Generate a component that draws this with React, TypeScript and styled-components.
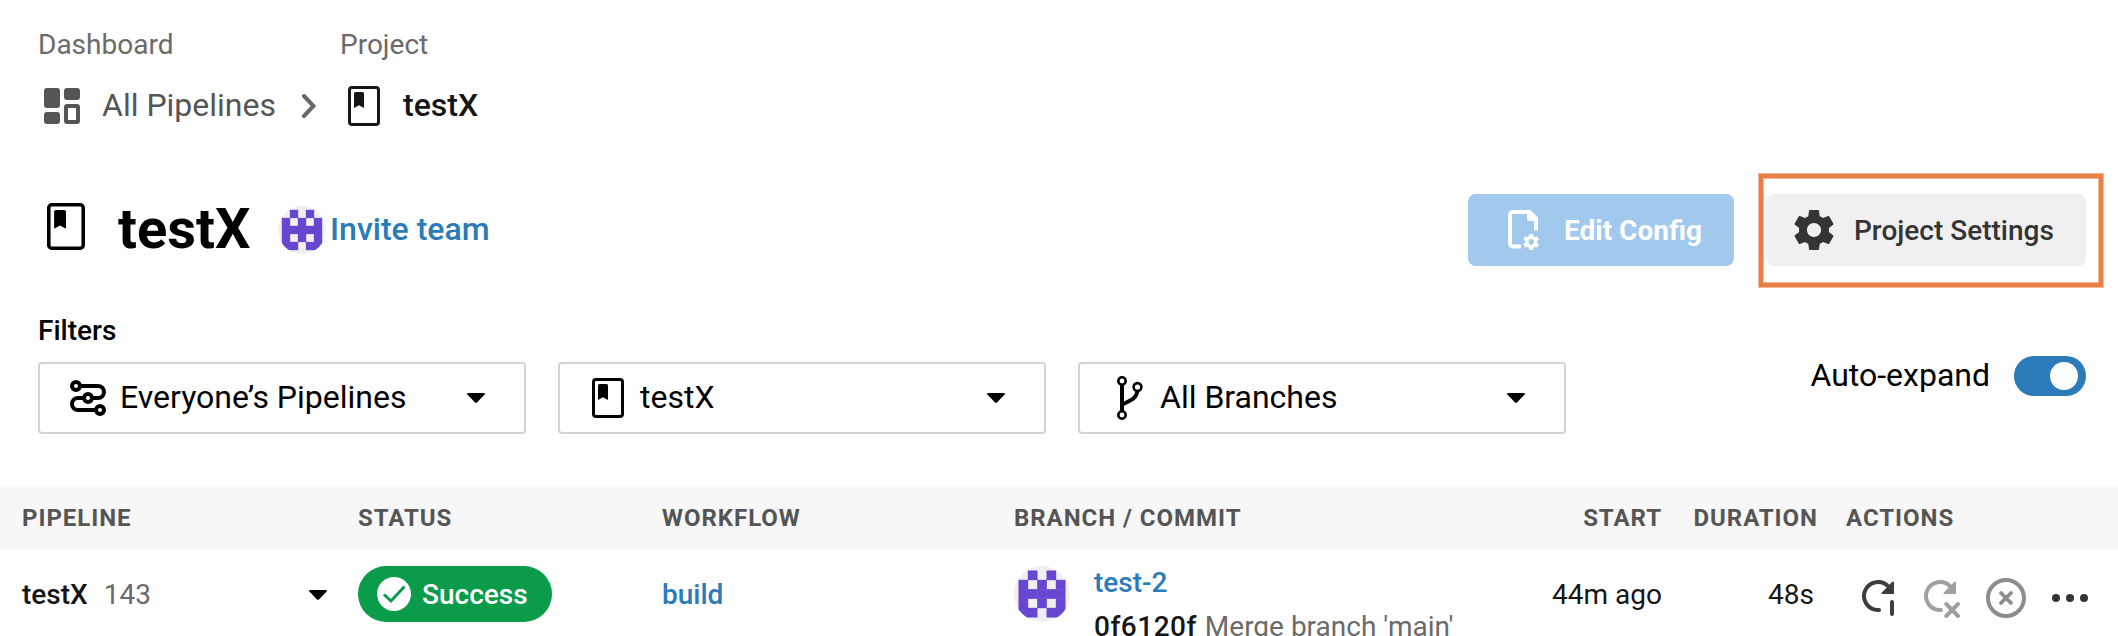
import React from 'react';
import styled, { createGlobalStyle } from 'styled-components';

const GlobalStyle = createGlobalStyle`
  * { box-sizing: border-box; }
  body {
    margin: 0;
    background: #fff;
    color: #000;
    font-family: Roboto, "Liberation Sans", sans-serif;
    overflow: hidden;
  }
  svg { display: block; flex: none; }
`;

const Page = styled.div`
  width: 2118px;
  height: 636px;
  overflow: hidden;
  background: #fff;
`;

/* ---------- breadcrumbs ---------- */
const Breadcrumbs = styled.nav`
  display: grid;
  grid-template-columns: 302px auto;
  grid-template-rows: 33px 44px;
  row-gap: 23px;
  padding: 28px 0 0 38px;
`;

const CrumbLabel = styled.span`
  font-size: 28px;
  line-height: 33px;
  color: #6a6a6a;
`;

const Crumb = styled.div<{ $pad: number }>`
  display: flex;
  align-items: center;
  padding-left: ${(p) => p.$pad}px;
`;

const CrumbText = styled.span<{ $current?: boolean; $gap: number }>`
  margin-left: ${(p) => p.$gap}px;
  font-size: 32px;
  line-height: 42px;
  margin-bottom: 2px;
  font-weight: ${(p) => (p.$current ? 500 : 400)};
  color: ${(p) => (p.$current ? '#161616' : '#555')};
`;

const ChevronSlot = styled.span`
  margin-left: 25px;
`;

/* ---------- title bar ---------- */
const TitleBar = styled.header`
  display: flex;
  align-items: center;
  height: 72px;
  margin-top: 66px;
  padding: 0 32px 0 47px;
`;

const TitleIcon = styled.span`
  margin-bottom: 8px;
`;

const Title = styled.h1`
  margin: 0 0 2px 33px;
  width: 160px;
  font-size: 56px;
  line-height: 64px;
  font-weight: 700;
`;

const InviteLink = styled.a`
  margin: 0 0 2px 4px;
  font-size: 32px;
  line-height: 40px;
  font-weight: 500;
  color: #2b7bb9;
`;

const TitleActions = styled.div`
  display: flex;
  gap: 32px;
  margin-left: auto;
`;

const Button = styled.button<{ $tone: 'primary' | 'neutral'; $width: number; $pad: number }>`
  position: relative;
  display: flex;
  align-items: center;
  width: ${(p) => p.$width}px;
  height: 72px;
  padding: 0 0 0 ${(p) => p.$pad}px;
  border: 0;
  border-radius: 8px;
  font: 500 28px/33px Roboto, "Liberation Sans", sans-serif;
  font-weight: ${(p) => (p.$tone === 'primary' ? 700 : 500)};
  white-space: nowrap;
  color: ${(p) => (p.$tone === 'primary' ? '#fff' : '#343434')};
  background: ${(p) => (p.$tone === 'primary' ? '#a0c9ed' : '#f0f0f0')};
`;

const ButtonLabel = styled.span<{ $gap: number }>`
  margin: 1px 0 0 ${(p) => p.$gap}px;
`;

const Highlight = styled.span`
  position: absolute;
  inset: -20px -17px -21px -7px;
  border: 4px solid #ea7f46;
  box-shadow: 0 0 0 1px #f4b899, inset 0 0 0 1px #f4b899;
`;

/* ---------- filters ---------- */
const FilterBar = styled.section`
  display: flex;
  justify-content: space-between;
  height: 120px;
  margin-top: 48px;
  padding: 0 32px 0 38px;
`;

const FilterLabel = styled.div`
  margin-bottom: 15px;
  font-size: 28px;
  line-height: 33px;
  font-weight: 500;
`;

const Selects = styled.div`
  display: flex;
  gap: 32px;
`;

const Select = styled.div<{ $pad: number }>`
  display: flex;
  align-items: center;
  width: 488px;
  height: 72px;
  padding: 0 39px 0 ${(p) => p.$pad}px;
  border: 2px solid #d3d3d3;
  border-radius: 4px;
`;

const SelectText = styled.span<{ $gap: number }>`
  flex: 1;
  margin: 0 0 2px ${(p) => p.$gap}px;
  font-size: 32px;
  line-height: 40px;
`;

const AutoExpand = styled.div`
  display: flex;
  align-items: center;
  gap: 24px;
  height: 40px;
  margin-top: 42px;
  font-size: 32px;
  line-height: 38px;
`;

const AutoExpandText = styled.span`
  margin-bottom: 2px;
`;

const Toggle = styled.span`
  display: flex;
  justify-content: flex-end;
  width: 72px;
  height: 40px;
  padding: 6px 8px;
  border-radius: 20px;
  background: #2b7bb9;
`;

const Knob = styled.span`
  width: 28px;
  height: 28px;
  border-radius: 50%;
  background: #fff;
`;

/* ---------- table ---------- */
const columns = '336px 304px 352px 450px 198px 156px 1fr';

const TableHead = styled.div`
  display: grid;
  grid-template-columns: ${columns};
  align-items: center;
  height: 64px;
  margin-top: 52px;
  padding-left: 22px;
  background: #f7f7f7;
  color: #555;
  font-size: 24px;
  line-height: 32px;
  font-weight: 700;
  letter-spacing: 0.96px;
`;

const HeadCell = styled.span<{ $align?: 'left' | 'right'; $indent?: number }>`
  text-align: ${(p) => p.$align ?? 'left'};
  padding-left: ${(p) => p.$indent ?? 0}px;
`;

const TableRow = styled.div`
  display: grid;
  grid-template-columns: ${columns};
  align-items: start;
  padding-left: 22px;
  font-size: 28px;
  line-height: 33px;
  color: #161616;
`;

const Cell = styled.div<{ $right?: number }>`
  display: flex;
  align-items: center;
  height: 57px;
  margin-top: 16px;
  justify-content: ${(p) => (p.$right === undefined ? 'flex-start' : 'flex-end')};
  padding-right: ${(p) => p.$right ?? 0}px;
`;

const BadgeCell = styled(Cell)`
  height: 56px;
`;

const PipelineName = styled.span`
  font-weight: 500;
`;

const PipelineNumber = styled.span`
  flex: 1;
  margin-left: 16px;
  color: #6a6a6a;
`;

const CaretSlot = styled.span`
  margin-right: 31px;
`;

const Badge = styled.span`
  display: flex;
  align-items: center;
  gap: 11px;
  width: 194px;
  height: 56px;
  padding-left: 19px;
  border-radius: 28px;
  background: #0a9b4b;
  color: #fff;
  font-weight: 500;
`;

const BadgeText = styled.span`
  padding-top: 1px;
`;

const Link = styled.a`
  color: #2b7bb9;
  font-weight: 500;
`;

const CommitCell = styled.div`
  display: flex;
  gap: 24px;
`;

const AvatarSlot = styled.span`
  margin-top: 16px;
`;

const CommitLines = styled.div`
  display: flex;
  flex-direction: column;
  gap: 11px;
  padding-top: 16px;
  white-space: nowrap;
`;

const CommitHash = styled.span`
  font-weight: 500;
  letter-spacing: 0.5px;
`;

const CommitMessage = styled.span`
  margin-left: 8px;
  color: #6a6a6a;
`;

const Actions = styled.div`
  display: flex;
  gap: 22px;
  margin-top: 28px;
  padding-left: 44px;
`;

/* ---------- icons ---------- */
const GEAR =
  'M19.43 12.98c.04-.32.07-.64.07-.98s-.03-.66-.07-.98l2.11-1.65c.19-.15.24-.42.12-.64l-2-3.46c-.12-.22-.39-.3-.61-.22l-2.49 1c-.52-.4-1.08-.73-1.69-.98l-.38-2.65C14.46 2.18 14.25 2 14 2h-4c-.25 0-.46.18-.49.42l-.38 2.65c-.61.25-1.17.59-1.69.98l-2.49-1c-.23-.09-.49 0-.61.22l-2 3.46c-.13.22-.07.49.12.64l2.11 1.65c-.04.32-.07.65-.07.98s.03.66.07.98l-2.11 1.65c-.19.15-.24.42-.12.64l2 3.46c.12.22.39.3.61.22l2.49-1c.52.4 1.08.73 1.69.98l.38 2.65c.03.24.24.42.49.42h4c.25 0 .46-.18.49-.42l.38-2.65c.61-.25 1.17-.59 1.69-.98l2.49 1c.23.09.49 0 .61-.22l2-3.46c.12-.22.07-.49-.12-.64l-2.11-1.65zM12 15.5c-1.93 0-3.5-1.57-3.5-3.5s1.57-3.5 3.5-3.5 3.5 1.57 3.5 3.5-1.57 3.5-3.5 3.5z';

const BookIcon = ({ width = 32, height = 40, color = '#000' }) => (
  <svg width={width} height={height} viewBox="0 0 32 40" preserveAspectRatio="none">
    <rect x="1.5" y="1.5" width="29" height="37" rx="2.5" fill="none" stroke={color} strokeWidth="3" />
    <path d="M7.5 6h7a1.5 1.5 0 0 1 1.5 1.5V22l-5-2.8L6 22V7.5A1.5 1.5 0 0 1 7.5 6z" fill={color} />
  </svg>
);

const DashboardIcon = () => (
  <svg width="36" height="36" viewBox="0 0 36 36" fill="#555">
    <rect width="16" height="20" rx="3" />
    <rect x="20" width="16" height="12" rx="3" />
    <rect y="24" width="16" height="12" rx="3" />
    <rect x="22" y="18" width="12" height="16" rx="1" fill="none" stroke="#555" strokeWidth="4" />
  </svg>
);

const ChevronIcon = () => (
  <svg width="16" height="24" viewBox="0 0 16 24" fill="none" stroke="#6a6a6a" strokeWidth="4" strokeLinecap="round" strokeLinejoin="miter">
    <path d="M3 2l9.500 10L3 22" />
  </svg>
);

const CaretIcon = () => (
  <svg width="18" height="10" viewBox="0 0 18 10">
    <path d="M1 0h16c.9 0 1.3 1 .6 1.600L10 9.400c-.6.6-1.400.6-2 0L.4 1.600C-.3 1 .1 0 1 0z" fill="#000" />
  </svg>
);

const Identicon = ({ size }: { size: number }) => {
  const rows = ['.#.#.', '#.#.#', '#####', '#.#.#', '##.##'];
  return (
    <svg width={size} height={size} viewBox="0 0 6 6">
      <defs>
        <clipPath id={`round-${size}`}>
          <circle cx="3" cy="3" r="3" />
        </clipPath>
      </defs>
      <g clipPath={`url(#round-${size})`}>
        <rect width="6" height="6" fill="#f0f0f0" />
        {rows.flatMap((row, y) =>
          row.split('').map((c, x) =>
            c === '#' ? <rect key={`${x}-${y}`} x={x + 0.48} y={y + 0.48} width="1.04" height="1.04" fill="#6747d2" /> : null,
          ),
        )}
      </g>
    </svg>
  );
};

const FileGearIcon = () => (
  <svg width="32" height="40" viewBox="0 0 32 40">
    <path d="M13 36.400H5A3 3 0 0 1 2 33.400V5A3 3 0 0 1 5 2h15" fill="none" stroke="#fff" strokeWidth="4" />
    <path d="M19 0h3.500L30 7.500V20.500h-4V11h-5a2 2 0 0 1-2-2z" fill="#fff" />
    <g transform="translate(13.600 22.300) scale(.8)">
      <path d={GEAR} fill="#fff" />
    </g>
  </svg>
);

const GearIcon = () => (
  <svg width="48" height="48" viewBox="0 0 24 24" fill="#343434">
    <path d={GEAR} />
  </svg>
);

const PipelinesIcon = () => (
  <svg width="36" height="36" viewBox="0 0 36 36" fill="none" stroke="#000" strokeWidth="4">
    <circle cx="6" cy="6" r="4" />
    <circle cx="18" cy="18" r="4" />
    <circle cx="30" cy="30" r="4" />
    <path d="M10 6h18a6 6 0 0 1 0 12h-6M14 18H8a6 6 0 0 0 0 12h18" />
  </svg>
);

const BranchIcon = () => (
  <svg width="26" height="44" viewBox="0 0 26 44" fill="none" stroke="#000">
    <circle cx="5" cy="5" r="3.700" strokeWidth="2.600" />
    <circle cx="5" cy="39" r="3.700" strokeWidth="2.600" />
    <circle cx="20.500" cy="11" r="3.900" strokeWidth="2.600" />
    <path d="M5 9v26" strokeWidth="4" />
    <path d="M20.400 15c-1 8-7.400 9.500-14.400 13" strokeWidth="3.800" />
  </svg>
);

const CheckIcon = () => (
  <svg width="34" height="34" viewBox="0 0 34 34">
    <circle cx="17" cy="17" r="17" fill="#fff" />
    <path d="M7 17.500l7 6.500L27.500 9.500" fill="none" stroke="#0a9b4b" strokeWidth="3" />
  </svg>
);

const RerunIcon = ({ failed }: { failed?: boolean }) => {
  const color = failed ? '#a0a0a0' : '#3d3d3d';
  return (
    <svg width="40" height="40" viewBox="0 0 40 40" fill="none" stroke={color} strokeWidth="4" strokeLinecap="round">
      <path d="M26.500 8.700A14 14 0 1 0 16 32h1" />
      <path d="M32 4.200V16H20.500c-1 0-1.300-1-.6-1.600L30 4c.8-.8 2-.8 2 .2z" fill={color} stroke="none" />
      {failed ? <path d="M22.300 26L34 38M34 26L22.300 38" /> : <path d="M30 24v12" />}
    </svg>
  );
};

const CancelIcon = () => (
  <svg width="40" height="40" viewBox="0 0 40 40" fill="none" stroke="#8c8c8c" strokeWidth="4" strokeLinecap="round">
    <circle cx="20" cy="20" r="18" />
    <path d="M15 15l10 10M25 15L15 25" strokeWidth="3.800" />
  </svg>
);

const MoreIcon = () => (
  <svg width="40" height="40" viewBox="0 0 40 40" fill="#343434">
    <circle cx="8" cy="20" r="4" />
    <circle cx="22" cy="20" r="4" />
    <circle cx="36" cy="20" r="4" />
  </svg>
);

export default function App() {
  return (
    <Page>
      <GlobalStyle />
      <Breadcrumbs>
        <CrumbLabel>Dashboard</CrumbLabel>
        <CrumbLabel>Project</CrumbLabel>
        <Crumb $pad={6}>
          <DashboardIcon />
          <CrumbText $gap={22}>All Pipelines</CrumbText>
          <ChevronSlot>
            <ChevronIcon />
          </ChevronSlot>
        </Crumb>
        <Crumb $pad={8}>
          <BookIcon color="#161616" />
          <CrumbText $current $gap={23}>testX</CrumbText>
        </Crumb>
      </Breadcrumbs>

      <TitleBar>
        <TitleIcon>
          <BookIcon width={38} height={47} />
        </TitleIcon>
        <Title>testX</Title>
        <Identicon size={48} />
        <InviteLink>Invite team</InviteLink>
        <TitleActions>
          <Button $tone="primary" $width={266} $pad={40}>
            <FileGearIcon />
            <ButtonLabel $gap={24}>Edit Config</ButtonLabel>
          </Button>
          <Button $tone="neutral" $width={320} $pad={24}>
            <GearIcon />
            <ButtonLabel $gap={16}>Project Settings</ButtonLabel>
            <Highlight />
          </Button>
        </TitleActions>
      </TitleBar>

      <FilterBar>
        <div>
          <FilterLabel>Filters</FilterLabel>
          <Selects>
            <Select $pad={30}>
              <PipelinesIcon />
              <SelectText $gap={14}>Everyone’s Pipelines</SelectText>
              <CaretIcon />
            </Select>
            <Select $pad={32}>
              <BookIcon />
              <SelectText $gap={16}>testX</SelectText>
              <CaretIcon />
            </Select>
            <Select $pad={37}>
              <BranchIcon />
              <SelectText $gap={17}>All Branches</SelectText>
              <CaretIcon />
            </Select>
          </Selects>
        </div>
        <AutoExpand>
          <AutoExpandText>Auto-expand</AutoExpandText>
          <Toggle>
            <Knob />
          </Toggle>
        </AutoExpand>
      </FilterBar>

      <TableHead>
        <HeadCell>PIPELINE</HeadCell>
        <HeadCell>STATUS</HeadCell>
        <HeadCell>WORKFLOW</HeadCell>
        <HeadCell>BRANCH / COMMIT</HeadCell>
        <HeadCell $align="right">START</HeadCell>
        <HeadCell $align="right">DURATION</HeadCell>
        <HeadCell $indent={28}>ACTIONS</HeadCell>
      </TableHead>

      <TableRow>
        <Cell>
          <PipelineName>testX</PipelineName>
          <PipelineNumber>143</PipelineNumber>
          <CaretSlot>
            <CaretIcon />
          </CaretSlot>
        </Cell>
        <BadgeCell>
          <Badge>
            <CheckIcon />
            <BadgeText>Success</BadgeText>
          </Badge>
        </BadgeCell>
        <Cell>
          <Link>build</Link>
        </Cell>
        <CommitCell>
          <AvatarSlot>
            <Identicon size={56} />
          </AvatarSlot>
          <CommitLines>
            <Link>test-2</Link>
            <div>
              <CommitHash>0f6120f</CommitHash>
              <CommitMessage>Merge branch 'main'</CommitMessage>
            </div>
          </CommitLines>
        </CommitCell>
        <Cell $right={0}>44m ago</Cell>
        <Cell $right={4}>48s</Cell>
        <Actions>
          <RerunIcon />
          <RerunIcon failed />
          <CancelIcon />
          <MoreIcon />
        </Actions>
      </TableRow>
    </Page>
  );
}
